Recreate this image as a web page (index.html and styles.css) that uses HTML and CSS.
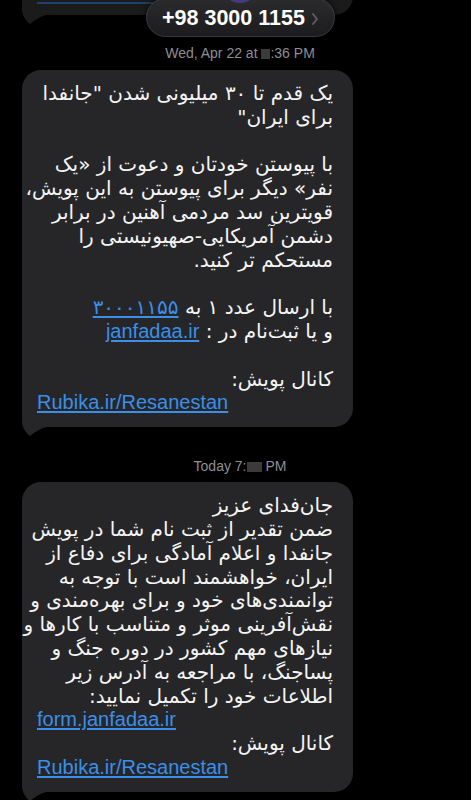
FILE: index.html
```html
<!DOCTYPE html>
<html lang="fa">
<head>
    <meta charset="UTF-8">
    <meta name="viewport" content="width=device-width, initial-scale=1.0">
    <title>+98 3000 1155</title>
    <link rel="stylesheet" href="styles.css">
</head>
<body>

    <div class="thread">
        <!-- Rest der vorherigen Nachricht, unter der Kopfzeile -->
        <div class="bubble faded">
            <svg class="tail" width="30" height="30" viewBox="0 0 30 30"><path d="M0,0 L0,15 C0,21 3,26 8,30 C12,27 17,23 24,21 L30,21 L30,0 Z"/></svg>
            <div class="underline-rest"></div>
        </div>

        <div class="stamp">Wed, Apr 22 at <span class="redact"></span>:36 PM</div>

        <div class="bubble" dir="rtl">
            <svg class="tail" width="30" height="30" viewBox="0 0 30 30"><path d="M0,0 L0,15 C0,21 3,26 8,30 C12,27 17,23 24,21 L30,21 L30,0 Z"/></svg>
            <div class="line">یک قدم تا ۳۰ میلیونی شدن "جانفدا</div>
            <div class="line">برای ایران"</div>
            <div class="gap"></div>
            <div class="line">با پیوستن خودتان و دعوت از «یک</div>
            <div class="line">نفر» دیگر برای پیوستن به این پویش،</div>
            <div class="line">قویترین سد مردمی آهنین در برابر</div>
            <div class="line">دشمن آمریکایی-صهیونیستی را</div>
            <div class="line">مستحکم تر کنید.</div>
            <div class="gap"></div>
            <div class="line">با ارسال عدد ۱ به <a class="link" href="#">۳۰۰۰۱۱۵۵</a></div>
            <div class="line">و یا ثبت‌نام در : <a class="link latin" href="#">janfadaa.ir</a></div>
            <div class="gap"></div>
            <div class="line">کانال پویش:</div>
            <div class="line ltr" dir="ltr"><a class="link latin" href="#">Rubika.ir/Resanestan</a></div>
        </div>

        <div class="stamp second">Today 7:<span class="redact wide"></span> PM</div>

        <div class="bubble" dir="rtl">
            <svg class="tail" width="30" height="30" viewBox="0 0 30 30"><path d="M0,0 L0,15 C0,21 3,26 8,30 C12,27 17,23 24,21 L30,21 L30,0 Z"/></svg>
            <div class="line">جان‌فدای عزیز</div>
            <div class="line">ضمن تقدیر از ثبت نام شما در پویش</div>
            <div class="line">جانفدا و اعلام آمادگی برای دفاع از</div>
            <div class="line">ایران، خواهشمند است با توجه به</div>
            <div class="line">توانمندی‌های خود و برای بهره‌مندی و</div>
            <div class="line">نقش‌آفرینی موثر و متناسب با کارها و</div>
            <div class="line">نیازهای مهم کشور در دوره جنگ و</div>
            <div class="line">پساجنگ، با مراجعه به آدرس زیر</div>
            <div class="line">اطلاعات خود را تکمیل نمایید:</div>
            <div class="line ltr" dir="ltr"><a class="link latin" href="#">form.janfadaa.ir</a></div>
            <div class="line">کانال پویش:</div>
            <div class="line ltr" dir="ltr"><a class="link latin" href="#">Rubika.ir/Resanestan</a></div>
        </div>
    </div>

    <!-- Kopfzeile liegt über dem Verlauf -->
    <div class="header">
        <div class="pill">
            <span class="number">+98 3000 1155</span>
            <svg class="chevron" width="8" height="14" viewBox="0 0 8 14"><polyline points="2,2 6,7 2,12"/></svg>
        </div>
        <div class="avatar"></div>
    </div>

</body>
</html>
```

FILE: styles.css
```css
body {
    margin: 0;
    height: 800px;
    overflow: hidden;
    position: relative;
    background-color: #000;
    color: #f4f4f5;
    font-family: "DejaVu Sans", "Liberation Sans", sans-serif;
}
.thread {
    padding-left: 22px;
}
.bubble {
    position: relative;
    width: 331px;
    box-sizing: border-box;
    padding: 12px 20px 12px 15px;
    background-color: #262628;
    border-radius: 19px;
    font-size: 20px;
    line-height: 23.8px;
    direction: rtl;
    text-align: right;
}
/* Schwanz zuerst im DOM, damit der Text darüber liegt */
.bubble .tail {
    position: absolute;
    left: 0;
    bottom: -9px;
    fill: #262628;
}
.bubble.faded {
    height: 44px;
    margin-top: -29px;
    padding: 0;
    background-color: #1b1b1c;
}
.bubble.faded .tail {
    fill: #1b1b1c;
}
.underline-rest {
    position: absolute;
    left: 15px;
    top: 31px;
    width: 191px;
    height: 2px;
    background-color: #1d416b;
}
.line {
    position: relative;
    white-space: nowrap;
}
.line.ltr {
    direction: ltr;
    text-align: left;
}
.gap {
    height: 23.8px;
}
.link {
    color: #3a8fe9;
    text-decoration: underline;
    text-underline-offset: 2px;
}
.latin {
    font-family: "Liberation Sans", sans-serif;
    font-size: 20px;
}
.stamp {
    margin: 30px 0 9px;
    padding-right: 13px;
    font-family: "Liberation Sans", sans-serif;
    font-size: 14px;
    line-height: 16px;
    color: #8e8e93;
    text-align: center;
}
.stamp.second {
    margin-top: 31px;
    margin-bottom: 8px;
}
.redact {
    display: inline-block;
    width: 9px;
    height: 10px;
    vertical-align: -1px;
    background-color: #3b3b3e;
}
.redact.wide {
    width: 15px;
}
.header {
    position: absolute;
    top: 0;
    left: 0;
    right: 0;
}
.pill {
    position: absolute;
    left: 146px;
    top: -2px;
    width: 189px;
    height: 39px;
    box-sizing: border-box;
    display: flex;
    align-items: center;
    padding-left: 15px;
    gap: 6px;
    border-radius: 20px;
    border: 1px solid #3a3a3d;
    background: linear-gradient(#2b2b2d, #1c1c1e);
    box-shadow: 0 0 6px rgba(0, 0, 0, 0.8);
}
.number {
    font-family: "Liberation Sans", sans-serif;
    font-weight: bold;
    font-size: 21.5px;
    color: #fff;
    padding-top: 2px;
}
.chevron {
    fill: none;
    stroke: #5e5e62;
    stroke-width: 2;
    stroke-linecap: round;
    stroke-linejoin: round;
    margin-top: 2px;
}
.avatar {
    position: absolute;
    left: 222px;
    top: -33px;
    width: 36px;
    height: 36px;
    border-radius: 50%;
    background-color: #453c7c;
}
```
